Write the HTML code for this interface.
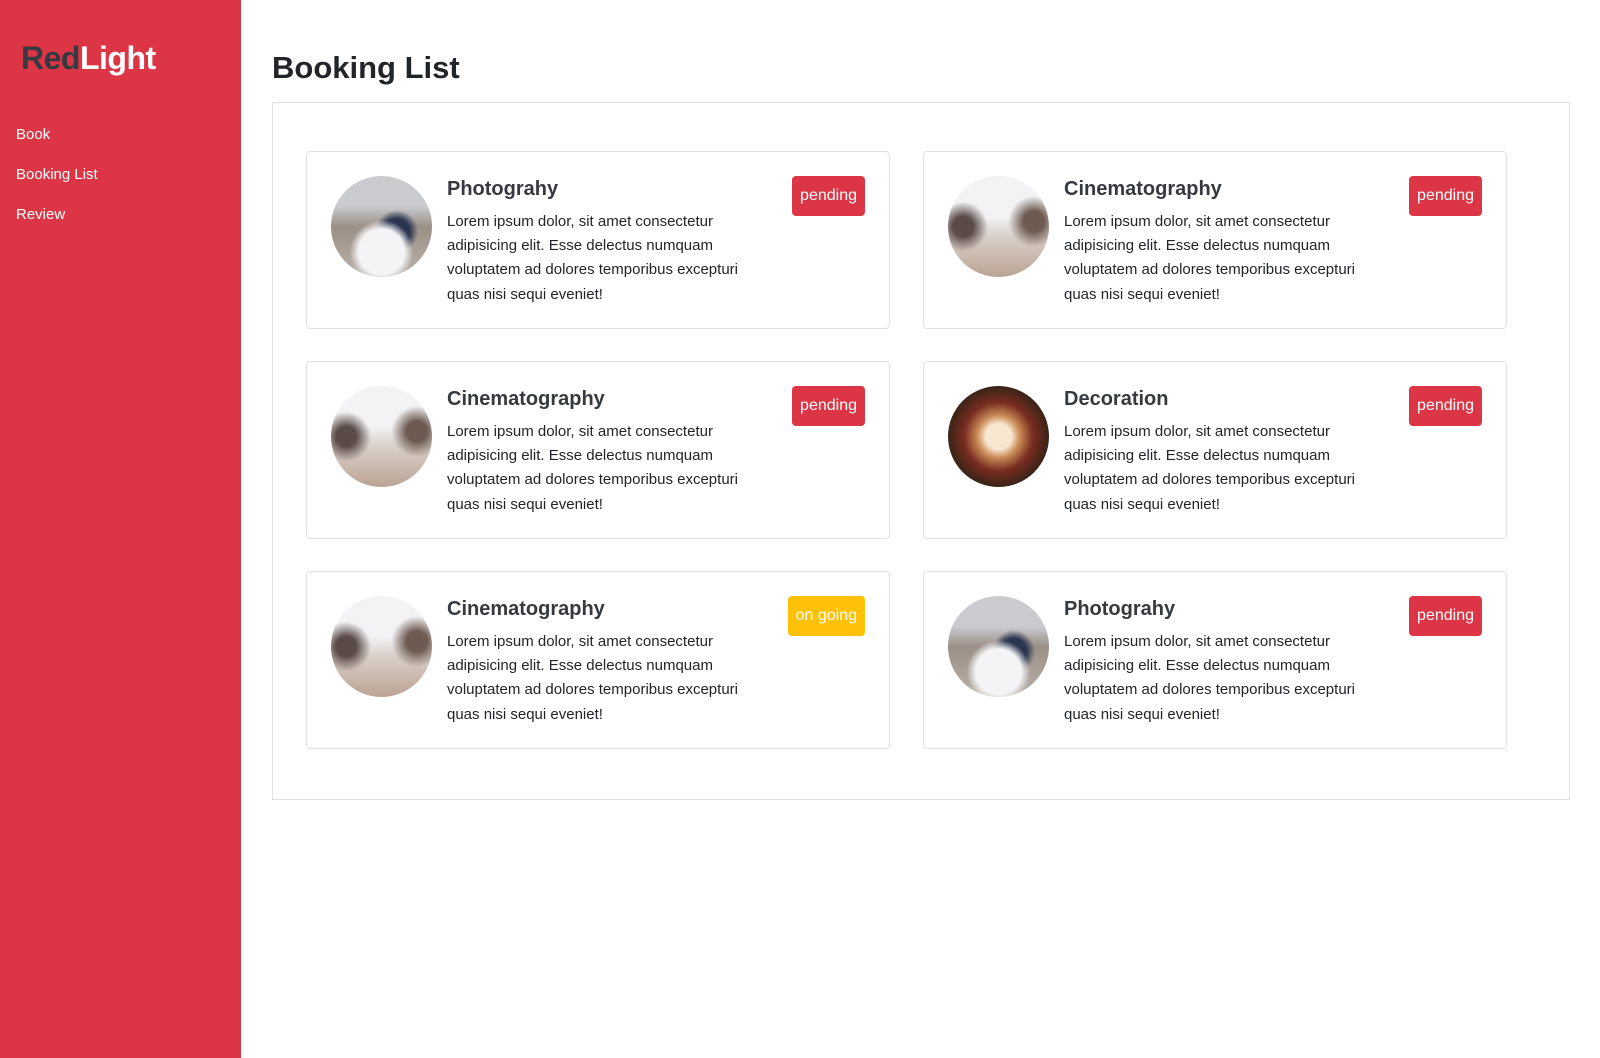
<!DOCTYPE html>
<html><head><style>
*{box-sizing:border-box;margin:0;padding:0}
body{width:1600px;height:1058px;font-family:"Liberation Sans",sans-serif;color:#212529;background:#fff;position:relative;overflow:hidden}
.side{position:absolute;left:0;top:0;width:241px;height:1058px;background:#dc3545}
.logo{position:absolute;left:21px;top:40px;font-size:32px;font-weight:bold;letter-spacing:-0.5px}
.logo .a{color:#343a40}.logo .b{color:#fff}
.nav a{position:absolute;left:16px;color:#fff;font-size:15px;text-decoration:none}
h1{position:absolute;left:272px;top:50px;font-size:31px;font-weight:bold;color:#212529}
.box{position:absolute;left:272px;top:102px;width:1298px;height:698px;border:1px solid #dee2e6}
.card{position:absolute;width:584px;height:178px;border:1px solid #dee2e6;border-radius:4px}
.av{position:absolute;left:24px;top:24px;width:101px;height:101px;border-radius:50%}
.t{position:absolute;left:140px;top:26px;font-size:20px;font-weight:bold;color:#343a40}
.p{position:absolute;left:140px;top:58px;font-size:15px;line-height:24.2px;color:#212529;white-space:nowrap}
.bd{position:absolute;top:24px;right:24px;height:40px;padding:0 8px;line-height:40px;font-size:16px;color:#fff;background:#dc3545;border-radius:4px}
.y{background:#ffc107}
.ph{background:radial-gradient(circle at 50% 75%,#f4f4f6 0 25%,transparent 35%),radial-gradient(circle at 65% 55%,#2a3550 0 15%,transparent 25%),linear-gradient(#c9cbcf 0 30%,#9b8f86 50%,#b9b2aa)}
.ci{background:radial-gradient(circle at 15% 50%,#5a4a48 0 10%,transparent 25%),radial-gradient(circle at 85% 45%,#6d5a50 0 10%,transparent 25%),linear-gradient(#f3f3f6 0 40%,#d8cfc8 60%,#bba394)}
.de{background:radial-gradient(circle at 50% 50%,#f7e6d0 0 18%,#c98a55 30%,#7a2c20 48%,#3a2418 70%)}
</style></head><body>
<div class="side">
<div class="logo"><span class="a">Red</span><span class="b">Light</span></div>
<div class="nav"><a style="top:126px">Book</a><a style="top:166px">Booking List</a><a style="top:206px">Review</a></div>
</div>
<h1>Booking List</h1>
<div class="box"></div>

<div class="card" style="left:306px;top:151px"><div class="av ph"></div><div class="t">Photograhy</div><div class="p">Lorem ipsum dolor, sit amet consectetur<br>adipisicing elit. Esse delectus numquam<br>voluptatem ad dolores temporibus excepturi<br>quas nisi sequi eveniet!</div><div class="bd">pending</div></div>
<div class="card" style="left:923px;top:151px"><div class="av ci"></div><div class="t">Cinematography</div><div class="p">Lorem ipsum dolor, sit amet consectetur<br>adipisicing elit. Esse delectus numquam<br>voluptatem ad dolores temporibus excepturi<br>quas nisi sequi eveniet!</div><div class="bd">pending</div></div>
<div class="card" style="left:306px;top:361px"><div class="av ci"></div><div class="t">Cinematography</div><div class="p">Lorem ipsum dolor, sit amet consectetur<br>adipisicing elit. Esse delectus numquam<br>voluptatem ad dolores temporibus excepturi<br>quas nisi sequi eveniet!</div><div class="bd">pending</div></div>
<div class="card" style="left:923px;top:361px"><div class="av de"></div><div class="t">Decoration</div><div class="p">Lorem ipsum dolor, sit amet consectetur<br>adipisicing elit. Esse delectus numquam<br>voluptatem ad dolores temporibus excepturi<br>quas nisi sequi eveniet!</div><div class="bd">pending</div></div>
<div class="card" style="left:306px;top:571px"><div class="av ci"></div><div class="t">Cinematography</div><div class="p">Lorem ipsum dolor, sit amet consectetur<br>adipisicing elit. Esse delectus numquam<br>voluptatem ad dolores temporibus excepturi<br>quas nisi sequi eveniet!</div><div class="bd y">on going</div></div>
<div class="card" style="left:923px;top:571px"><div class="av ph"></div><div class="t">Photograhy</div><div class="p">Lorem ipsum dolor, sit amet consectetur<br>adipisicing elit. Esse delectus numquam<br>voluptatem ad dolores temporibus excepturi<br>quas nisi sequi eveniet!</div><div class="bd">pending</div></div>
</body></html>
